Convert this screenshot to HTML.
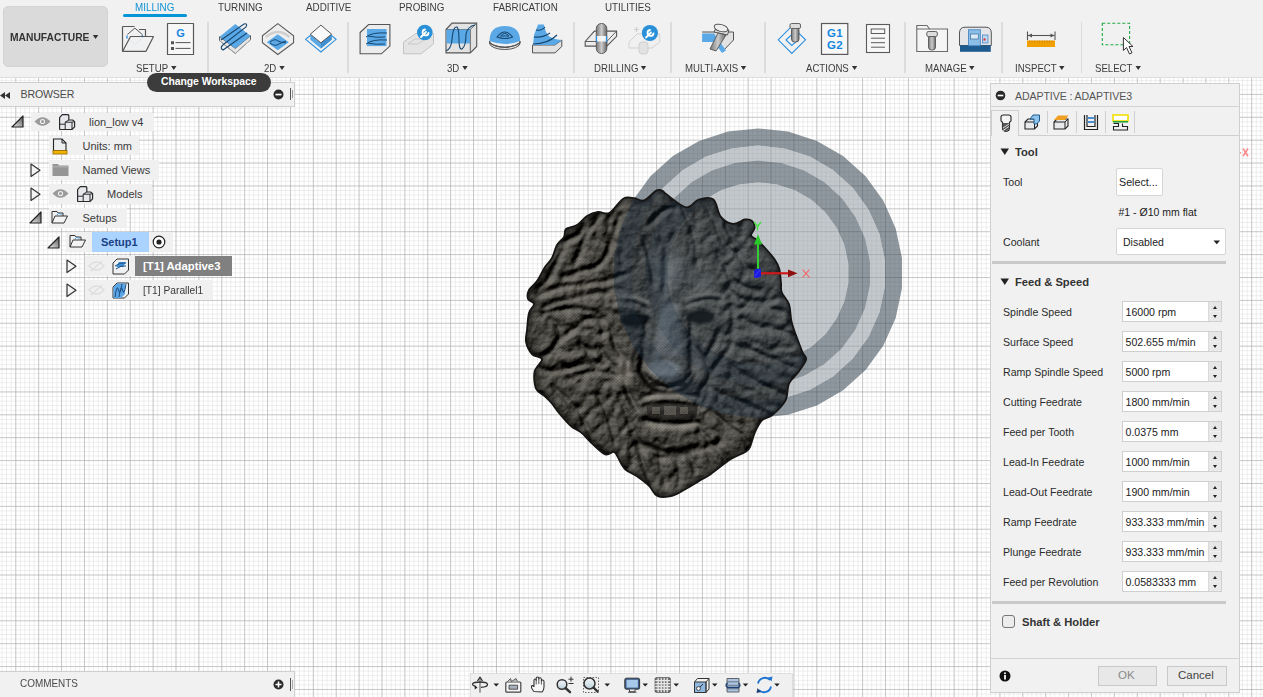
<!DOCTYPE html>
<html><head><meta charset="utf-8">
<style>
*{box-sizing:border-box;margin:0;padding:0}
html,body{width:1263px;height:697px;overflow:hidden;background:#fff;font-family:"Liberation Sans",sans-serif;color:#333}
.abs{position:absolute}
#grid{position:absolute;left:0;top:0}
#tb{position:absolute;left:0;top:0;width:1263px;height:78px;background:#f1f1f1;border-bottom:1px solid #dedede}
.tab{position:absolute;top:1.3px;font-size:10.8px;color:#3c3c3c;white-space:nowrap;transform:scaleX(.91);transform-origin:0 0}
.lbl{position:absolute;top:62px;font-size:10.7px;color:#3c3c3c;white-space:nowrap;transform:scaleX(.9);transform-origin:0 0}
.lbl i{display:inline-block;width:0;height:0;border-left:3.5px solid transparent;border-right:3.5px solid transparent;border-top:4px solid #333;margin-left:3px;vertical-align:2px}
.sep{position:absolute;top:22px;width:1.5px;height:51px;background:#dcdcdc}
.panelhdr{position:absolute;background:#f1f1f1;border:1px solid #dcdcdc}
.ti{position:absolute;font-size:11px;color:#3a3a3a;white-space:nowrap}
.row{position:absolute;left:1003px;font-size:10.6px;color:#2b2b2b;white-space:nowrap}
.inp{position:absolute;left:1122px;width:100px;height:21px;background:#fff;border:1px solid #cfcfcf;font-size:10.6px;color:#222;padding:4px 0 0 2.5px;white-space:nowrap}
.inp .sp{position:absolute;right:0;top:0;width:13.5px;height:19px;background:#e6e6e6;border-left:1px solid #dadada;box-shadow:inset 0 -9.5px 0 #e9e9e9, inset 0 -10px 0 #f4f4f4}
.inp .sp:before{content:"";position:absolute;left:4px;top:4px;border-left:2.5px solid transparent;border-right:2.5px solid transparent;border-bottom:3.5px solid #222}
.inp .sp:after{content:"";position:absolute;left:4px;top:12.5px;border-left:2.5px solid transparent;border-right:2.5px solid transparent;border-top:3.5px solid #222}
</style></head><body>
<svg id="grid" width="1263" height="697">
<defs>
<pattern id="minor" x="15.3" y="93.9" width="4.5774" height="4.5774" patternUnits="userSpaceOnUse">
<path d="M0 0H4.5774M0 0V4.5774" stroke="#dcdcdc" stroke-width="1" fill="none"/>
</pattern>
<pattern id="major" x="15.3" y="93.9" width="22.887" height="22.887" patternUnits="userSpaceOnUse">
<path d="M0 0H22.887M0 0V22.887" stroke="#a2a2a2" stroke-width="1" fill="none"/>
</pattern>
</defs>
<rect width="1263" height="697" fill="#fff"/>
<rect width="1263" height="697" fill="url(#minor)"/>
<rect width="1263" height="697" fill="url(#major)"/>
</svg>

<!-- VIEWPORT -->
<svg class="abs" style="left:0;top:0" width="1263" height="697">
<defs>
<path id="lion" d="M662.0 190.5C663.9 191.2 663.1 192.0 667.1 194.8C671.1 197.6 680.8 206.5 686.1 207.3C691.4 208.1 694.2 200.8 698.8 199.5C703.3 198.2 709.8 196.7 713.4 199.5C717.0 202.3 717.5 212.5 720.7 216.6C724.0 220.7 728.9 223.4 732.9 223.9C736.9 224.4 741.8 220.0 745.0 219.5C748.2 219.0 750.4 219.6 752.0 221.0C753.6 222.4 754.8 225.6 754.6 228.0C754.4 230.4 750.6 233.5 751.0 235.5C751.4 237.5 754.5 237.8 757.0 240.0C759.5 242.2 763.0 245.7 766.0 249.0C769.0 252.3 772.8 256.7 775.0 260.0C777.2 263.3 778.3 265.2 779.3 269.0C780.3 272.8 780.6 279.1 781.0 283.0C781.4 286.9 780.4 288.6 781.7 292.2C783.0 295.8 787.4 299.5 789.0 304.4C790.6 309.3 790.3 316.2 791.5 321.5C792.7 326.8 794.5 331.0 796.3 336.1C798.1 341.2 800.8 348.1 802.4 352.0C804.0 355.9 806.7 356.1 806.1 359.3C805.5 362.6 801.6 367.4 798.8 371.5C795.9 375.6 791.2 378.8 789.0 383.7C786.8 388.6 788.2 395.4 785.4 400.7C782.6 406.0 775.9 412.1 772.0 415.4C768.1 418.6 765.1 417.4 762.2 420.2C759.4 423.0 756.9 427.9 754.9 432.4C752.9 436.9 751.6 443.7 750.0 447.0C748.4 450.3 748.4 449.9 745.1 452.0C741.9 454.1 736.2 455.7 730.5 459.3C724.8 462.9 716.3 470.2 711.0 473.9C705.7 477.5 702.9 478.8 698.8 481.2C694.7 483.6 691.1 486.1 686.6 488.5C682.1 490.9 676.9 494.7 672.0 495.9C667.1 497.1 661.1 497.5 657.3 495.9C653.5 494.3 652.7 489.4 649.3 486.1C645.9 482.8 641.1 479.2 637.0 476.3C632.9 473.4 628.1 472.2 624.9 469.0C621.7 465.8 619.4 459.6 617.6 456.8C615.8 454.0 615.9 452.4 613.9 452.0C611.9 451.6 608.8 455.6 605.4 454.4C602.0 453.2 597.3 448.3 593.2 444.6C589.1 440.9 584.7 435.4 581.0 432.4C577.3 429.3 574.9 429.5 571.2 426.3C567.5 423.1 562.2 416.9 559.0 413.0C555.8 409.1 554.1 406.1 551.7 403.2C549.3 400.3 547.0 398.3 544.4 395.9C541.8 393.4 537.5 392.6 535.9 388.5C534.3 384.4 533.6 376.4 534.6 371.5C535.6 366.6 542.4 362.2 542.0 359.3C541.6 356.4 534.9 357.2 532.2 354.4C529.6 351.5 527.0 346.3 526.1 342.2C525.2 338.1 526.5 334.9 527.0 330.0C527.5 325.1 527.8 317.3 529.0 313.0C530.2 308.7 534.2 306.3 534.0 304.0C533.8 301.7 528.8 301.3 528.0 299.0C527.2 296.7 527.5 293.0 529.0 290.0C530.5 287.0 534.3 284.8 537.0 281.0C539.7 277.2 542.5 270.8 545.0 267.0C547.5 263.2 550.0 261.7 552.0 258.0C554.0 254.3 555.0 248.5 557.0 245.0C559.0 241.5 562.5 239.7 564.0 237.0C565.5 234.3 563.8 231.0 566.0 229.0C568.2 227.0 573.5 227.2 577.0 225.0C580.5 222.8 583.5 218.2 587.0 216.0C590.5 213.8 594.2 212.5 598.0 212.0C601.8 211.5 605.3 215.1 609.5 212.9C613.7 210.7 619.1 201.1 623.2 198.7C627.4 196.2 631.0 197.9 634.4 198.2C637.8 198.5 640.3 201.6 643.9 200.4C647.5 199.2 652.9 192.6 655.9 190.9C658.9 189.2 660.1 189.8 662.0 190.5Z"/>
<clipPath id="lionclip"><use href="#lion"/></clipPath>
<clipPath id="circclip"><circle cx="758" cy="273" r="145"/></clipPath>
<filter id="soft" x="-5%" y="-5%" width="110%" height="110%"><feGaussianBlur stdDeviation="2"/></filter><filter id="soft4" x="-50%" y="-50%" width="200%" height="200%"><feGaussianBlur stdDeviation="4"/></filter>
<filter id="soft15" x="-5%" y="-5%" width="110%" height="110%"><feGaussianBlur stdDeviation="1.4"/></filter>
<radialGradient id="bump"><stop offset="0" stop-color="#f0f"/><stop offset="1" stop-color="#f00"/></radialGradient>
<filter id="relief" x="520" y="185" width="290" height="315" filterUnits="userSpaceOnUse" color-interpolation-filters="sRGB">
 <feGaussianBlur in="SourceGraphic" stdDeviation="2.3" result="b2"/>
 <feGaussianBlur in="SourceGraphic" stdDeviation="5" result="b5"/>
 <feColorMatrix in="b2" type="matrix" values="0 0 0 0 0  0 0 0 0 0  0 0 0 0 0  0 -0.42 0 0 0.42" result="c"/>
 <feColorMatrix in="b5" type="matrix" values="0 0 0 0 0  0 0 0 0 0  0 0 0 0 0  0.3 0 0.25 0 0" result="sh"/>
 <feTurbulence type="fractalNoise" baseFrequency="0.07" numOctaves="4" seed="5" result="nz"/>
 <feComposite in="c" in2="sh" operator="arithmetic" k2="1" k3="1" k4="0" result="h0"/>
 <feComposite in="h0" in2="nz" operator="arithmetic" k2="1" k3="0.3" k4="-0.15" result="h"/>
 <feDiffuseLighting in="h" surfaceScale="5" diffuseConstant="1" lighting-color="#fff" result="l"><feDistantLight azimuth="235" elevation="50"/></feDiffuseLighting>
 <feColorMatrix in="l" type="matrix" values="0.9 0 0 0 -0.39  0.89 0 0 0 -0.39  0.86 0 0 0 -0.39  0 0 0 0 1"/>
</filter>
<pattern id="dots" width="3.3" height="2.9" patternUnits="userSpaceOnUse"><circle cx="0.8" cy="0.8" r="0.6" fill="#000" fill-opacity="0.3"/><circle cx="2.45" cy="2.25" r="0.6" fill="#000" fill-opacity="0.3"/></pattern>
</defs>
<!-- stock rings -->
<path d="M758.0 128.4L788.1 131.6L816.9 140.9L843.1 156.1L865.6 176.3L883.4 200.8L895.7 228.5L902.0 258.1L902.0 288.3L895.7 317.9L883.4 345.6L865.6 370.1L843.1 390.3L816.9 405.5L788.1 414.8L758.0 418.0L727.9 414.8L699.1 405.5L672.9 390.3L650.4 370.1L632.6 345.6L620.3 317.9L614.0 288.3L614.0 258.1L620.3 228.5L632.6 200.8L650.4 176.3L672.9 156.1L699.1 140.9L727.9 131.6ZM731.5 148.4L706.1 156.6L683.0 170.0L663.2 187.8L647.5 209.4L636.6 233.8L631.1 259.9L631.1 286.5L636.6 312.6L647.5 337.0L663.2 358.6L683.0 376.4L706.1 389.8L731.5 398.0L758.0 400.8L784.5 398.0L809.9 389.8L833.0 376.4L852.8 358.6L868.5 337.0L879.4 312.6L884.9 286.5L884.9 259.9L879.4 233.8L868.5 209.4L852.8 187.8L833.0 170.0L809.9 156.6L784.5 148.4L758.0 145.6Z" fill="#33444f" fill-opacity="0.55" fill-rule="evenodd"/>
<path d="M758.0 145.6L784.5 148.4L809.9 156.6L833.0 170.0L852.8 187.8L868.5 209.4L879.4 233.8L884.9 259.9L884.9 286.5L879.4 312.6L868.5 337.0L852.8 358.6L833.0 376.4L809.9 389.8L784.5 398.0L758.0 400.8L731.5 398.0L706.1 389.8L683.0 376.4L663.2 358.6L647.5 337.0L636.6 312.6L631.1 286.5L631.1 259.9L636.6 233.8L647.5 209.4L663.2 187.8L683.0 170.0L706.1 156.6L731.5 148.4ZM734.6 163.1L712.2 170.3L691.8 182.1L674.3 197.9L660.5 216.9L650.9 238.4L646.0 261.4L646.0 285.0L650.9 308.0L660.5 329.5L674.3 348.5L691.8 364.3L712.2 376.1L734.6 383.3L758.0 385.8L781.4 383.3L803.8 376.1L824.2 364.3L841.7 348.5L855.5 329.5L865.1 308.0L870.0 285.0L870.0 261.4L865.1 238.4L855.5 216.9L841.7 197.9L824.2 182.1L803.8 170.3L781.4 163.1L758.0 160.6Z" fill="#929ba2" fill-opacity="0.55" fill-rule="evenodd"/>
<path d="M758.0 160.6L781.4 163.1L803.8 170.3L824.2 182.1L841.7 197.9L855.5 216.9L865.1 238.4L870.0 261.4L870.0 285.0L865.1 308.0L855.5 329.5L841.7 348.5L824.2 364.3L803.8 376.1L781.4 383.3L758.0 385.8L734.6 383.3L712.2 376.1L691.8 364.3L674.3 348.5L660.5 329.5L650.9 308.0L646.0 285.0L646.0 261.4L650.9 238.4L660.5 216.9L674.3 197.9L691.8 182.1L712.2 170.3L734.6 163.1ZM739.1 184.4L721.1 190.3L704.6 199.7L690.5 212.4L679.4 227.8L671.6 245.1L667.7 263.7L667.7 282.7L671.6 301.3L679.4 318.6L690.5 334.0L704.6 346.7L721.1 356.1L739.1 362.0L758.0 364.0L776.9 362.0L794.9 356.1L811.4 346.7L825.5 334.0L836.6 318.6L844.4 301.3L848.3 282.7L848.3 263.7L844.4 245.1L836.6 227.8L825.5 212.4L811.4 199.7L794.9 190.3L776.9 184.4L758.0 182.4Z" fill="#33444f" fill-opacity="0.55" fill-rule="evenodd"/>
<path d="M758.0 182.4L776.9 184.4L794.9 190.3L811.4 199.7L825.5 212.4L836.6 227.8L844.4 245.1L848.3 263.7L848.3 282.7L844.4 301.3L836.6 318.6L825.5 334.0L811.4 346.7L794.9 356.1L776.9 362.0L758.0 364.0L739.1 362.0L721.1 356.1L704.6 346.7L690.5 334.0L679.4 318.6L671.6 301.3L667.7 282.7L667.7 263.7L671.6 245.1L679.4 227.8L690.5 212.4L704.6 199.7L721.1 190.3L739.1 184.4Z" fill="#929ba2" fill-opacity="0.55"/>
<!-- lion -->
<g>
<g clip-path="url(#lionclip)">
<g filter="url(#relief)">
<use href="#lion" fill="#f00"/>

<ellipse cx="668" cy="372" rx="26" ry="18" fill="url(#bump)"/>
<ellipse cx="668" cy="335" rx="22" ry="42" fill="url(#bump)"/>
<ellipse cx="630" cy="368" rx="16" ry="24" fill="url(#bump)"/>
<ellipse cx="706" cy="366" rx="16" ry="24" fill="url(#bump)"/>
<ellipse cx="630" cy="300" rx="22" ry="9" fill="url(#bump)"/>
<ellipse cx="704" cy="297" rx="22" ry="9" fill="url(#bump)"/>
<ellipse cx="668" cy="268" rx="32" ry="30" fill="url(#bump)"/>
<ellipse cx="668" cy="432" rx="30" ry="12" fill="url(#bump)"/>
<ellipse cx="670" cy="398" rx="30" ry="6" fill="url(#bump)"/>
<ellipse cx="575" cy="290" rx="30" ry="10" fill="url(#bump)" transform="rotate(-10 575 290)"/>
<ellipse cx="570" cy="355" rx="26" ry="12" fill="url(#bump)" transform="rotate(-20 570 355)"/>
<ellipse cx="760" cy="340" rx="28" ry="10" fill="url(#bump)" transform="rotate(15 760 340)"/>

<path d="M601.6 346.8C611.3 346.5 593.9 350.2 590.0 350.2C586.1 350.1 582.1 345.8 578.2 346.4C574.3 347.1 570.7 353.8 566.8 354.1C562.9 354.4 558.8 347.7 554.9 348.0C551.0 348.2 547.3 355.0 543.5 355.7C539.6 356.3 522.0 353.3 531.7 351.9" stroke="#ff0" stroke-width="2" fill="none" stroke-linecap="round" opacity="0.8"/>
<path d="M605.6 332.0C612.1 333.1 599.7 335.0 597.1 334.5C594.5 334.1 592.6 330.0 590.0 329.2C587.5 328.5 584.6 329.6 581.9 329.9C579.1 330.2 576.1 331.8 573.6 331.1C571.0 330.4 569.2 326.2 566.6 325.7C564.0 325.2 551.6 326.9 558.1 327.9" stroke="#ff0" stroke-width="2" fill="none" stroke-linecap="round" opacity="0.8"/>
<path d="M610.4 326.7C616.5 328.9 606.1 323.2 603.9 321.7C601.7 320.1 599.7 317.9 597.2 317.3C594.6 316.8 591.3 318.2 588.5 318.2C585.8 318.3 582.9 318.5 580.5 317.4C578.2 316.4 576.5 313.2 574.3 311.7C572.1 310.3 561.1 306.2 567.1 308.7" stroke="#ff0" stroke-width="2" fill="none" stroke-linecap="round" opacity="0.8"/>
<path d="M616.7 314.5C623.4 317.2 611.5 312.0 608.8 311.0C606.1 309.9 602.7 310.0 600.3 308.4C597.9 306.9 597.1 302.6 594.4 301.5C591.7 300.4 586.6 303.5 584.2 302.1C581.7 300.6 582.4 293.8 579.7 292.6C577.1 291.4 562.3 291.3 568.5 294.9" stroke="#ff0" stroke-width="2" fill="none" stroke-linecap="round" opacity="0.8"/>
<path d="M603.8 303.4C609.1 305.8 603.8 295.9 602.6 293.7C601.5 291.5 599.5 290.4 596.9 290.2C594.3 289.9 589.1 293.2 586.9 292.4C584.8 291.5 585.0 287.4 584.0 285.0C583.0 282.5 583.3 278.4 581.1 277.5C579.0 276.6 567.4 275.4 571.2 279.7" stroke="#ff0" stroke-width="2" fill="none" stroke-linecap="round" opacity="0.8"/>
<path d="M622.9 290.6C626.7 293.7 618.9 288.9 616.4 288.5C613.9 288.2 609.4 289.7 608.1 288.2C606.8 286.7 608.9 282.1 608.5 279.7C608.1 277.4 607.8 275.0 605.7 274.3C603.7 273.5 598.1 276.0 596.0 275.2C594.0 274.4 589.1 266.9 593.6 269.4" stroke="#ff0" stroke-width="2" fill="none" stroke-linecap="round" opacity="0.8"/>
<path d="M622.6 266.1C627.6 274.9 613.0 262.6 610.7 259.3C608.4 256.0 611.0 249.6 608.8 246.2C606.6 242.8 599.9 242.3 597.6 238.9C595.3 235.6 597.1 229.8 594.9 226.4C592.7 223.0 586.9 221.9 584.5 218.6C582.2 215.3 574.6 198.6 581.0 206.5" stroke="#ff0" stroke-width="2" fill="none" stroke-linecap="round" opacity="0.8"/>
<path d="M621.8 263.3C623.8 269.1 620.8 258.4 620.9 255.6C621.1 252.8 623.9 248.7 623.0 246.4C622.2 244.1 618.3 243.4 615.8 241.9C613.2 240.5 608.7 240.1 607.6 237.9C606.5 235.8 608.8 231.9 609.0 229.1C609.3 226.2 607.0 215.2 609.2 220.9" stroke="#ff0" stroke-width="2" fill="none" stroke-linecap="round" opacity="0.8"/>
<path d="M642.1 255.9C645.6 267.0 636.7 247.7 634.1 243.6C631.6 239.5 628.6 235.5 626.9 231.1C625.1 226.8 624.1 222.2 623.4 217.5C622.6 212.8 623.0 207.7 622.3 203.0C621.7 198.2 621.1 193.5 619.5 189.1C617.8 184.7 608.9 165.3 612.7 176.5" stroke="#ff0" stroke-width="2" fill="none" stroke-linecap="round" opacity="0.8"/>
<path d="M660.2 243.0C660.6 251.1 662.3 236.3 661.3 233.1C660.3 230.0 654.5 227.2 654.4 224.0C654.3 220.7 660.5 217.0 660.6 213.7C660.8 210.4 656.5 207.5 655.4 204.4C654.3 201.2 653.5 198.0 654.0 194.7C654.6 191.4 657.4 176.6 658.4 184.6" stroke="#ff0" stroke-width="2" fill="none" stroke-linecap="round" opacity="0.8"/>
<path d="M670.7 240.0C670.8 245.9 672.5 235.4 673.5 233.1C674.4 230.8 676.7 228.6 676.4 226.2C676.1 223.8 671.9 221.3 671.6 218.9C671.4 216.6 673.8 214.3 674.8 212.0C675.7 209.7 677.7 207.5 677.3 205.1C677.0 202.7 673.8 192.0 672.6 197.8" stroke="#ff0" stroke-width="2" fill="none" stroke-linecap="round" opacity="0.8"/>
<path d="M690.2 252.0C689.6 257.2 690.0 247.6 689.6 245.3C689.3 243.1 687.7 240.6 687.9 238.4C688.2 236.3 689.8 234.5 691.1 232.6C692.4 230.7 695.0 229.0 695.7 227.0C696.5 225.0 695.9 222.7 695.6 220.5C695.2 218.2 694.5 208.3 693.7 213.5" stroke="#ff0" stroke-width="2" fill="none" stroke-linecap="round" opacity="0.8"/>
<path d="M706.5 257.6C702.1 267.8 701.7 246.2 703.3 242.1C704.9 237.9 713.4 236.5 715.9 232.7C718.3 228.9 717.4 223.8 718.1 219.3C718.8 214.9 717.6 209.6 720.1 205.8C722.5 202.0 731.2 200.7 732.8 196.5C734.4 192.4 734.1 170.9 729.7 181.1" stroke="#ff0" stroke-width="2" fill="none" stroke-linecap="round" opacity="0.8"/>
<path d="M718.9 270.0C713.5 276.2 717.1 261.1 718.9 258.4C720.7 255.7 727.9 256.3 729.8 253.6C731.6 250.9 728.2 244.9 730.0 242.2C731.8 239.5 738.8 240.0 740.6 237.3C742.5 234.6 739.3 228.8 741.1 226.0C742.9 223.3 755.2 213.6 751.5 220.9" stroke="#ff0" stroke-width="2" fill="none" stroke-linecap="round" opacity="0.8"/>
<path d="M721.4 278.2C715.1 286.3 724.0 269.9 726.4 266.6C728.8 263.2 732.9 261.2 735.7 258.2C738.6 255.2 741.1 252.0 743.5 248.6C745.8 245.2 747.1 241.1 749.9 238.1C752.8 235.1 758.0 233.9 760.4 230.6C762.8 227.3 770.9 210.2 764.4 218.1" stroke="#ff0" stroke-width="2" fill="none" stroke-linecap="round" opacity="0.8"/>
<path d="M722.6 297.3C717.8 300.8 724.9 292.8 726.1 290.7C727.4 288.6 728.2 286.0 730.3 284.8C732.5 283.6 736.9 284.9 738.9 283.5C740.9 282.2 741.0 278.9 742.3 276.8C743.6 274.7 744.5 272.2 746.6 271.0C748.7 269.8 759.1 265.4 755.1 269.7" stroke="#ff0" stroke-width="2" fill="none" stroke-linecap="round" opacity="0.8"/>
<path d="M726.9 312.3C720.7 314.6 729.3 305.7 732.0 305.1C734.7 304.6 740.5 309.7 743.2 309.1C745.9 308.6 746.5 304.1 748.2 301.8C749.9 299.4 750.6 295.3 753.4 294.8C756.1 294.3 761.9 299.4 764.6 298.8C767.3 298.2 775.8 289.0 769.5 291.2" stroke="#ff0" stroke-width="2" fill="none" stroke-linecap="round" opacity="0.8"/>
<path d="M735.8 319.0C725.4 321.9 740.1 308.0 744.1 306.4C748.0 304.7 755.4 310.7 759.4 309.2C763.4 307.8 764.3 299.3 768.2 297.6C772.1 296.0 778.9 300.6 783.0 299.2C787.0 297.8 788.5 290.8 792.4 289.1C796.4 287.4 815.9 284.0 806.5 289.0" stroke="#ff0" stroke-width="2" fill="none" stroke-linecap="round" opacity="0.8"/>
<path d="M727.7 336.5C718.9 337.6 733.8 330.8 737.2 329.9C740.6 328.9 744.6 330.6 748.2 330.8C751.8 330.9 755.6 331.9 759.0 330.9C762.4 329.9 765.1 325.0 768.6 324.7C772.2 324.4 776.8 329.5 780.3 329.2C783.9 329.0 798.7 322.0 789.9 323.2" stroke="#ff0" stroke-width="2" fill="none" stroke-linecap="round" opacity="0.8"/>
<path d="M722.4 344.4C713.0 343.9 729.9 342.3 733.7 343.2C737.4 344.1 741.2 349.8 745.0 349.7C748.8 349.6 752.5 342.6 756.2 342.6C760.0 342.6 763.8 349.0 767.5 349.8C771.3 350.6 775.0 348.1 778.8 347.5C782.6 346.9 799.5 346.7 790.1 346.2" stroke="#ff0" stroke-width="2" fill="none" stroke-linecap="round" opacity="0.8"/>
<path d="M739.3 348.7C727.7 346.3 748.7 350.7 753.3 352.3C757.9 353.8 762.4 357.1 767.0 358.1C771.7 359.1 776.5 358.4 781.3 358.2C786.1 358.0 791.0 356.3 795.7 356.8C800.4 357.4 804.9 359.8 809.5 361.4C814.2 363.0 835.1 368.7 823.4 366.6" stroke="#ff0" stroke-width="2" fill="none" stroke-linecap="round" opacity="0.8"/>
<path d="M723.9 358.2C712.4 356.3 732.0 364.5 736.6 365.3C741.2 366.1 746.7 362.7 751.5 363.0C756.2 363.3 760.6 364.7 764.9 367.0C769.1 369.4 772.5 375.3 776.9 377.1C781.3 378.8 786.4 377.4 791.1 377.5C795.9 377.5 816.7 380.3 805.5 377.1" stroke="#ff0" stroke-width="2" fill="none" stroke-linecap="round" opacity="0.8"/>
<path d="M723.6 369.2C718.2 365.7 729.8 367.1 732.2 368.0C734.5 368.9 735.6 372.9 737.6 374.8C739.5 376.6 741.5 378.5 744.0 379.0C746.5 379.4 750.2 376.8 752.6 377.6C755.0 378.4 756.2 382.1 758.2 383.9C760.1 385.8 770.1 391.2 764.3 388.7" stroke="#ff0" stroke-width="2" fill="none" stroke-linecap="round" opacity="0.8"/>
<path d="M731.9 377.1C721.4 371.7 737.3 387.1 741.3 389.6C745.4 392.1 752.2 389.5 756.3 392.0C760.3 394.6 761.4 402.3 765.5 404.8C769.5 407.3 776.5 404.4 780.6 407.0C784.6 409.5 785.6 417.5 789.6 420.0C793.7 422.5 814.5 429.0 804.9 421.9" stroke="#ff0" stroke-width="2" fill="none" stroke-linecap="round" opacity="0.8"/>
<path d="M725.4 395.3C721.1 390.4 733.8 393.1 736.0 394.4C738.3 395.7 737.8 400.5 739.0 403.0C740.3 405.6 741.1 408.7 743.6 409.7C746.0 410.8 751.8 407.6 753.8 409.2C755.8 410.8 754.2 417.0 755.6 419.4C756.9 421.9 767.0 427.8 761.9 423.8" stroke="#ff0" stroke-width="2" fill="none" stroke-linecap="round" opacity="0.8"/>
<path d="M719.8 398.1C714.9 392.4 719.4 406.7 721.7 408.7C724.1 410.6 732.0 407.3 734.0 409.6C735.9 411.9 732.0 419.7 733.6 422.4C735.2 425.0 740.9 423.8 743.5 425.5C746.1 427.2 747.8 429.7 749.2 432.6C750.5 435.4 756.4 448.5 751.5 442.8" stroke="#ff0" stroke-width="2" fill="none" stroke-linecap="round" opacity="0.8"/>
<path d="M707.0 414.3C702.2 405.5 706.2 423.7 708.3 427.1C710.4 430.5 717.9 431.0 719.6 434.6C721.3 438.2 716.9 445.1 718.6 448.7C720.2 452.4 727.2 453.1 729.4 456.5C731.6 459.8 730.2 465.1 731.5 468.9C732.8 472.7 741.3 488.5 737.2 479.4" stroke="#ff0" stroke-width="2" fill="none" stroke-linecap="round" opacity="0.8"/>
<path d="M699.1 432.7C695.8 423.6 706.3 438.2 707.7 441.8C709.1 445.4 706.6 450.5 707.5 454.3C708.4 458.1 711.4 461.1 713.2 464.5C715.0 467.9 717.5 471.1 718.4 474.9C719.3 478.7 717.1 483.7 718.6 487.3C720.0 490.8 730.4 505.5 727.2 496.4" stroke="#ff0" stroke-width="2" fill="none" stroke-linecap="round" opacity="0.8"/>
<path d="M693.5 448.3C692.2 442.5 698.1 452.1 698.4 454.5C698.7 457.0 695.1 460.3 695.3 462.8C695.6 465.2 698.7 466.9 699.9 469.1C701.1 471.2 702.6 473.3 702.6 475.8C702.6 478.3 699.5 481.6 700.1 483.9C700.7 486.2 707.2 495.7 706.1 489.8" stroke="#ff0" stroke-width="2" fill="none" stroke-linecap="round" opacity="0.8"/>
<path d="M673.1 449.8C671.9 444.5 669.5 454.2 669.8 456.3C670.2 458.5 673.6 460.4 675.1 462.4C676.5 464.5 678.7 466.5 678.5 468.7C678.3 470.8 674.8 473.1 673.6 475.3C672.4 477.5 670.7 479.7 671.3 481.8C671.9 483.9 676.8 493.2 677.1 487.9" stroke="#ff0" stroke-width="2" fill="none" stroke-linecap="round" opacity="0.8"/>
<path d="M655.3 441.3C656.7 435.9 659.9 446.2 660.4 448.5C661.0 450.8 659.8 452.9 658.5 455.0C657.3 457.1 653.3 459.0 652.9 461.2C652.6 463.4 655.7 465.9 656.6 468.2C657.5 470.5 659.1 472.9 658.3 475.1C657.6 477.2 652.5 486.7 652.0 481.1" stroke="#ff0" stroke-width="2" fill="none" stroke-linecap="round" opacity="0.8"/>
<path d="M639.9 434.6C642.1 427.9 639.5 440.4 637.9 442.8C636.3 445.3 631.2 446.5 630.3 449.2C629.4 451.9 632.5 455.9 632.6 458.9C632.6 461.8 631.9 464.6 630.3 467.0C628.7 469.5 623.6 470.8 622.7 473.4C621.9 476.1 622.3 489.6 625.1 483.1" stroke="#ff0" stroke-width="2" fill="none" stroke-linecap="round" opacity="0.8"/>
<path d="M632.5 425.8C635.7 417.3 622.9 429.2 621.2 432.4C619.4 435.6 622.8 441.3 622.1 445.0C621.5 448.7 619.8 452.0 617.4 454.8C615.0 457.7 608.9 458.8 607.7 462.2C606.4 465.7 611.0 471.9 610.0 475.5C609.1 479.1 598.2 491.9 601.9 483.7" stroke="#ff0" stroke-width="2" fill="none" stroke-linecap="round" opacity="0.8"/>
<path d="M613.4 405.3C621.1 396.2 612.4 417.0 609.6 420.8C606.8 424.7 599.5 424.9 596.5 428.6C593.5 432.2 594.1 439.0 591.3 442.9C588.6 446.8 582.9 448.3 579.8 452.0C576.7 455.6 575.7 461.0 572.9 464.9C570.2 468.8 556.5 485.4 563.2 475.5" stroke="#ff0" stroke-width="2" fill="none" stroke-linecap="round" opacity="0.8"/>
<path d="M612.0 394.9C621.0 387.6 605.9 402.1 602.2 404.9C598.5 407.7 592.9 408.4 589.8 411.9C586.8 415.5 587.4 423.2 583.8 426.2C580.3 429.2 571.6 426.3 568.3 429.6C565.1 433.0 567.9 443.2 564.5 446.4C561.1 449.6 540.1 457.3 548.1 448.8" stroke="#ff0" stroke-width="2" fill="none" stroke-linecap="round" opacity="0.8"/>
<path d="M613.3 384.2C618.2 380.5 605.6 381.4 603.5 382.7C601.4 384.1 602.5 390.3 600.9 392.3C599.3 394.3 596.3 394.2 593.8 394.9C591.3 395.6 587.6 394.5 585.9 396.5C584.3 398.4 585.6 405.0 583.7 406.5C581.7 408.0 569.2 409.1 574.1 405.4" stroke="#ff0" stroke-width="2" fill="none" stroke-linecap="round" opacity="0.8"/>
<path d="M608.5 369.8C614.3 368.8 604.4 372.0 601.8 371.7C599.2 371.4 595.5 367.7 593.0 367.8C590.6 367.8 588.8 369.7 587.1 371.9C585.4 374.1 584.8 379.4 582.9 381.0C581.0 382.6 578.4 382.1 575.7 381.6C573.1 381.1 561.6 379.9 567.1 378.0" stroke="#ff0" stroke-width="2" fill="none" stroke-linecap="round" opacity="0.8"/>
<path d="M601.5 353.5C608.3 352.1 597.7 363.3 595.1 364.4C592.5 365.5 588.7 360.4 585.8 360.0C582.9 359.7 580.3 360.7 577.8 362.4C575.3 364.2 573.7 370.3 570.9 370.5C568.1 370.7 563.8 363.4 561.1 363.7C558.3 364.0 547.6 374.1 554.3 372.4" stroke="#ff0" stroke-width="2" fill="none" stroke-linecap="round" opacity="0.8"/>
<path d="M601.8 348.2C608.1 347.5 596.9 352.9 594.3 352.6C591.7 352.3 588.8 346.4 586.3 346.4C583.7 346.4 581.4 351.5 578.9 352.7C576.4 353.9 573.9 354.4 571.3 353.8C568.7 353.1 565.8 348.4 563.3 348.9C560.8 349.5 549.6 357.0 556.0 356.8" stroke="#ff0" stroke-width="2" fill="none" stroke-linecap="round" opacity="0.8"/>
<path d="M600.9 214.3C603.8 208.3 594.9 222.6 592.3 226.3C589.7 230.0 587.4 232.4 585.4 236.7C583.4 241.0 582.0 247.8 580.3 252.1C578.6 256.4 571.7 268.8 575.1 262.5" stroke="#ff0" stroke-width="3" fill="none" stroke-linecap="round"/>
<path d="M616.4 216.0C624.7 209.7 614.4 230.4 613.0 236.7C611.6 243.0 610.4 249.0 607.8 253.9C605.2 258.8 602.1 263.0 597.5 265.9C592.9 268.8 586.0 269.7 580.3 271.1C574.5 272.5 557.0 283.7 563.0 274.5" stroke="#ff0" stroke-width="3" fill="none" stroke-linecap="round"/>
<path d="M583.7 226.3C588.9 221.7 580.2 234.1 576.8 236.7C573.3 239.3 566.7 239.5 563.0 241.8C559.3 244.1 557.3 246.7 554.4 250.4C551.5 254.1 540.9 268.2 545.8 264.2" stroke="#ff0" stroke-width="3" fill="none" stroke-linecap="round"/>
<path d="M623.3 274.5C633.6 272.2 609.8 279.7 602.6 281.4C595.4 283.1 587.8 283.8 580.3 284.9C572.8 286.0 564.5 286.6 557.9 288.3C551.3 290.0 529.8 297.5 540.7 295.2" stroke="#ff0" stroke-width="3" fill="none" stroke-linecap="round"/>
<path d="M623.3 200.5C624.4 198.8 618.7 205.9 616.4 209.1C614.1 212.2 608.4 220.8 609.5 219.4" stroke="#ff0" stroke-width="3" fill="none" stroke-linecap="round"/>
<path d="M564.8 241.8C568.5 236.6 561.3 253.0 559.6 257.3C557.9 261.6 556.1 264.2 554.4 267.6C552.7 271.1 552.2 274.6 549.3 278.0C546.4 281.4 534.6 294.3 537.2 288.3" stroke="#ff0" stroke-width="3" fill="none" stroke-linecap="round"/>
<path d="M545.8 307.2C538.6 308.4 555.8 302.3 563.0 300.3C570.2 298.3 581.7 296.4 588.9 295.2C596.1 294.0 613.3 291.4 606.1 293.4" stroke="#ff0" stroke-width="3" fill="none" stroke-linecap="round"/>
<path d="M544.1 315.8C536.9 314.4 553.6 311.9 559.6 310.7C565.6 309.5 574.3 308.6 580.3 308.9C586.3 309.2 592.1 310.7 595.8 312.4C599.5 314.1 611.2 318.7 602.6 319.3" stroke="#ff0" stroke-width="3" fill="none" stroke-linecap="round"/>
<path d="M554.4 348.5C548.4 348.8 561.1 340.2 564.8 336.5C568.5 332.8 572.8 329.1 576.8 326.2C580.8 323.3 585.2 319.9 588.9 319.3C592.6 318.7 597.2 320.1 599.2 322.7C601.2 325.3 608.4 330.5 600.9 334.8" stroke="#ff0" stroke-width="3" fill="none" stroke-linecap="round"/>
<path d="M542.4 355.4C543.9 359.7 553.3 350.2 556.2 346.8C559.1 343.4 559.6 338.8 559.6 334.8C559.6 330.8 558.2 325.0 556.2 322.7C554.2 320.4 549.8 315.6 547.5 321.0" stroke="#ff0" stroke-width="3" fill="none" stroke-linecap="round"/>
<path d="M537.2 367.5C529.2 368.4 548.6 370.9 554.4 370.9C560.1 370.9 566.0 368.6 571.7 367.5C577.5 366.4 583.8 364.3 588.9 364.0C594.0 363.7 611.2 365.2 602.6 365.8" stroke="#ff0" stroke-width="3" fill="none" stroke-linecap="round"/>
<path d="M568.2 379.5C562.8 379.2 575.4 375.5 580.3 374.4C585.2 373.2 592.0 372.3 597.5 372.6C603.0 372.9 617.9 375.0 613.0 376.1" stroke="#ff0" stroke-width="3" fill="none" stroke-linecap="round"/>
<path d="M597.5 348.5C592.9 340.5 603.0 355.4 606.1 358.9C609.2 362.3 613.0 364.6 616.4 369.2C619.8 373.8 623.9 380.1 626.8 386.4C629.7 392.7 638.5 413.4 633.6 407.1" stroke="#ff0" stroke-width="3" fill="none" stroke-linecap="round"/>
<path d="M554.4 386.4C552.1 384.2 559.3 392.9 563.0 396.8C566.7 400.7 578.2 411.7 576.8 410.0" stroke="#ff0" stroke-width="3" fill="none" stroke-linecap="round"/>
<path d="M540.7 393.3C540.7 393.3 547.5 403.6 547.5 403.6" stroke="#ff0" stroke-width="3" fill="none" stroke-linecap="round"/>
<path d="M580.3 341.7C578.6 338.6 583.4 347.4 585.4 350.3C587.4 353.2 590.6 355.8 592.3 358.9C594.0 362.0 597.8 372.1 595.8 369.2" stroke="#ff0" stroke-width="3" fill="none" stroke-linecap="round"/>
<path d="M620.0 397.9C616.1 386.8 625.3 412.1 627.9 418.4C630.5 424.7 634.0 430.5 635.8 435.8C637.6 441.1 637.3 444.5 638.9 450.0C640.5 455.5 643.1 463.1 645.2 468.9C647.3 474.7 655.7 496.5 651.5 484.7" stroke="#ff0" stroke-width="3" fill="none" stroke-linecap="round"/>
<path d="M578.9 405.8C575.5 401.1 583.9 419.7 586.8 426.3C589.7 432.9 592.9 440.5 596.3 445.2C599.7 449.9 610.2 461.3 607.3 454.7" stroke="#ff0" stroke-width="3" fill="none" stroke-linecap="round"/>
<path d="M597.9 396.3C596.6 391.3 604.9 408.2 607.3 413.7C609.7 419.2 610.8 424.5 612.1 429.5C613.4 434.5 617.6 449.2 615.2 443.7" stroke="#ff0" stroke-width="3" fill="none" stroke-linecap="round"/>
<path d="M657.9 456.3C657.6 454.2 661.5 467.4 662.6 472.1C663.7 476.8 665.0 487.3 664.2 484.7" stroke="#ff0" stroke-width="3" fill="none" stroke-linecap="round"/>
<path d="M676.8 456.3C677.3 453.7 680.0 466.8 680.0 472.1C680.0 477.4 677.3 490.5 676.8 487.9" stroke="#ff0" stroke-width="3" fill="none" stroke-linecap="round"/>
<path d="M689.4 456.3C689.4 456.3 695.7 472.1 695.7 472.1" stroke="#ff0" stroke-width="3" fill="none" stroke-linecap="round"/>
<path d="M636.0 430.0C622.7 430.3 636.3 438.3 638.0 442.0C639.7 445.7 641.0 449.3 646.0 452.0C651.0 454.7 659.0 458.3 668.0 458.0C677.0 457.7 691.7 453.0 700.0 450.0C708.3 447.0 728.7 443.3 718.0 440.0" stroke="#ff0" stroke-width="3" fill="none" stroke-linecap="round"/>
<path d="M648.4 420.0C642.2 420.4 656.8 425.4 662.6 426.3C668.4 427.2 676.9 425.9 683.1 425.5C689.3 425.1 705.8 424.8 700.0 423.9" stroke="#ff0" stroke-width="3" fill="none" stroke-linecap="round"/>
<path d="M728.2 300.0C733.9 287.0 732.4 315.4 732.8 323.0C733.2 330.6 733.5 338.2 730.5 345.9C727.5 353.5 719.1 362.0 714.5 368.9C709.9 375.8 705.7 381.9 703.0 387.3C700.3 392.7 694.2 415.7 698.4 401.1" stroke="#ff0" stroke-width="3" fill="none" stroke-linecap="round"/>
<path d="M742.0 318.4C735.5 316.1 753.5 325.3 760.4 327.6C767.3 329.9 776.9 329.9 783.4 332.2C789.9 334.5 806.3 343.6 799.4 341.3" stroke="#ff0" stroke-width="3" fill="none" stroke-linecap="round"/>
<path d="M744.3 345.9C738.6 343.6 754.6 352.4 760.4 355.1C766.1 357.8 773.1 359.7 778.8 362.0C784.5 364.3 800.5 371.6 794.8 368.9" stroke="#ff0" stroke-width="3" fill="none" stroke-linecap="round"/>
<path d="M732.8 366.6C727.0 363.9 743.1 374.7 748.9 378.1C754.6 381.6 761.5 384.6 767.3 387.3C773.0 390.0 789.1 397.6 783.4 394.2" stroke="#ff0" stroke-width="3" fill="none" stroke-linecap="round"/>
<path d="M714.5 391.9C708.0 388.8 726.3 396.1 732.8 398.8C739.3 401.5 747.0 404.8 753.5 407.9C760.0 410.9 778.4 419.8 771.9 417.1" stroke="#ff0" stroke-width="3" fill="none" stroke-linecap="round"/>
<path d="M709.9 410.2C706.1 406.0 720.2 419.4 725.9 424.0C731.6 428.6 740.5 433.6 744.3 437.8C748.1 442.0 754.6 453.9 748.9 449.3" stroke="#ff0" stroke-width="3" fill="none" stroke-linecap="round"/>
<path d="M693.8 419.4C690.0 414.9 699.5 428.6 703.0 433.2C706.5 437.8 710.7 442.5 714.5 447.0C718.3 451.5 729.4 464.6 725.9 460.0" stroke="#ff0" stroke-width="3" fill="none" stroke-linecap="round"/>
<path d="M755.8 300.0C752.4 297.7 766.5 306.9 771.9 309.2C777.2 311.5 784.5 311.5 787.9 313.8C791.3 316.1 797.9 325.3 792.5 323.0" stroke="#ff0" stroke-width="3" fill="none" stroke-linecap="round"/>
<path d="M650.3 224.4C647.1 225.6 654.6 218.1 657.2 215.8C659.8 213.5 662.6 211.8 665.8 210.7C669.0 209.5 678.8 206.6 676.2 208.9" stroke="#ff0" stroke-width="3" fill="none" stroke-linecap="round"/>
<path d="M681.3 207.2C680.2 200.9 687.7 218.7 690.0 224.4C692.3 230.2 694.0 235.4 695.1 241.7C696.2 248.0 699.1 268.1 696.8 262.3" stroke="#ff0" stroke-width="3" fill="none" stroke-linecap="round"/>
<path d="M703.7 203.8C699.7 197.8 709.7 210.6 712.3 215.8C714.9 221.0 716.9 229.6 719.2 234.8C721.5 240.0 723.2 243.9 726.1 246.8C729.0 249.7 740.2 259.2 736.5 252.0" stroke="#ff0" stroke-width="3" fill="none" stroke-linecap="round"/>
<path d="M726.1 224.4C722.1 218.9 730.7 233.6 733.0 238.2C735.3 242.8 738.2 247.7 739.9 252.0C741.6 256.3 740.4 260.9 743.3 264.1C746.2 267.3 760.0 277.6 757.1 271.0" stroke="#ff0" stroke-width="3" fill="none" stroke-linecap="round"/>
<path d="M717.5 252.0C711.8 248.3 723.8 262.9 726.1 267.5C728.4 272.1 728.4 276.4 731.3 279.6C734.2 282.8 738.4 284.8 743.3 286.5C748.2 288.2 764.9 295.6 760.6 289.9" stroke="#ff0" stroke-width="3" fill="none" stroke-linecap="round"/>
<path d="M727.8 286.5C721.5 285.9 732.5 294.2 736.5 296.8C740.5 299.4 745.7 301.3 752.0 301.9C758.3 302.5 778.3 302.8 774.3 300.2" stroke="#ff0" stroke-width="3" fill="none" stroke-linecap="round"/>
<path d="M665.8 241.7C666.1 237.4 666.1 258.9 665.8 267.5C665.5 276.1 664.1 297.6 664.1 293.3" stroke="#ff0" stroke-width="3" fill="none" stroke-linecap="round"/>
<path d="M643.4 238.2C642.8 233.9 648.6 251.1 650.3 258.8C652.0 266.6 654.9 288.1 653.8 284.7" stroke="#ff0" stroke-width="3" fill="none" stroke-linecap="round"/>
<path d="M613.0 303.0C610.1 301.7 624.3 300.9 630.0 302.0C635.7 303.1 650.2 309.6 647.4 309.8" stroke="#ff0" stroke-width="3" fill="none" stroke-linecap="round"/>
<path d="M686.4 305.3C683.6 305.2 698.2 300.8 704.0 300.0C709.8 299.2 723.8 299.8 720.9 300.7" stroke="#ff0" stroke-width="3" fill="none" stroke-linecap="round"/>
<path d="M642.8 367.2C635.9 369.5 645.5 377.6 649.7 381.0C653.9 384.4 661.9 387.9 668.0 387.9C674.1 387.9 682.6 384.4 686.4 381.0C690.2 377.6 698.3 369.5 691.0 367.2" stroke="#ff0" stroke-width="3" fill="none" stroke-linecap="round"/>
<path d="M647.4 319.0C647.6 315.3 644.8 337.0 644.0 345.0C643.2 353.0 642.2 371.5 642.8 367.2" stroke="#ff0" stroke-width="3" fill="none" stroke-linecap="round"/>
<path d="M691.0 319.0C691.2 315.3 692.0 337.0 692.0 345.0C692.0 353.0 691.2 371.5 691.0 367.2" stroke="#ff0" stroke-width="3" fill="none" stroke-linecap="round"/>
<path d="M642.8 399.4C637.4 398.6 656.6 394.8 665.8 394.8C675.0 394.8 701.7 398.6 697.9 399.4" stroke="#ff0" stroke-width="3" fill="none" stroke-linecap="round"/>
<path d="M645.0 406.0C640.3 405.5 661.2 403.8 670.0 404.0C678.8 404.2 702.2 406.7 698.0 407.0" stroke="#ff0" stroke-width="3" fill="none" stroke-linecap="round"/>
<path d="M642.8 420.0C638.1 420.1 660.8 422.6 670.0 423.0C679.2 423.4 702.4 422.8 697.9 422.3" stroke="#ff0" stroke-width="3" fill="none" stroke-linecap="round"/>
<path d="M641.0 441.0C635.7 442.5 658.2 452.5 668.0 453.0C677.8 453.5 704.5 446.0 700.0 444.0" stroke="#ff0" stroke-width="3" fill="none" stroke-linecap="round"/>
<path d="M629.0 360.3C627.1 357.2 625.2 382.1 626.7 390.2C628.2 398.2 637.8 413.6 638.2 408.6" stroke="#ff0" stroke-width="3" fill="none" stroke-linecap="round"/>
<path d="M704.8 358.0C706.3 354.2 710.2 377.2 709.4 385.6C708.6 394.0 701.0 413.2 700.2 408.6" stroke="#ff0" stroke-width="3" fill="none" stroke-linecap="round"/>
<path d="M612.0 330.0C610.2 328.3 615.2 344.9 618.0 350.0C620.8 355.1 630.0 363.6 629.0 360.3" stroke="#ff0" stroke-width="3" fill="none" stroke-linecap="round"/>
<path d="M720.0 330.0C721.2 328.3 714.5 343.3 712.0 348.0C709.5 352.7 703.5 361.0 704.8 358.0" stroke="#ff0" stroke-width="3" fill="none" stroke-linecap="round"/>
</g>

<g filter="url(#soft15)">
<path d="M612 300Q630 292 650 304" stroke="#c9c4b8" stroke-width="4" fill="none" opacity="0.57"/>
<path d="M684 302Q704 290 724 296" stroke="#c9c4b8" stroke-width="4" fill="none" opacity="0.57"/>
<ellipse cx="634" cy="320" rx="14" ry="7" fill="#000" opacity="0.85"/>
<ellipse cx="701" cy="317" rx="14" ry="7" fill="#000" opacity="0.85"/>
<path d="M660 305Q668 300 678 305L684 360Q668 352 652 360Z" fill="#c0c8d0" opacity="0.25"/>
<ellipse cx="664" cy="368" rx="16" ry="8" fill="#c0c8d0" opacity="0.47"/>
<path d="M640 372Q648 392 668 394Q688 392 696 372" stroke="#000" stroke-width="4" fill="none" opacity="0.95"/>
<path d="M640 345Q632 352 630 372" stroke="#000" stroke-width="3.5" fill="none" opacity="0.85"/>
<path d="M696 345Q704 352 706 372" stroke="#000" stroke-width="3.5" fill="none" opacity="0.85"/>
<ellipse cx="624" cy="372" rx="8" ry="14" fill="#c9c4b8" opacity="0.34"/>
<ellipse cx="700" cy="368" rx="8" ry="14" fill="#c9c4b8" opacity="0.27"/>
<path d="M644 398Q668 392 698 398" stroke="#c9c4b8" stroke-width="3" fill="none" opacity="0.57"/>
<path d="M646 424Q670 430 698 424" stroke="#c9c4b8" stroke-width="3" fill="none" opacity="0.47"/>
<path d="M641 441Q668 458 700 444" stroke="#000" stroke-width="2" fill="none" opacity="0.8"/>
</g>
<g filter="url(#soft4)">
<path d="M662 300Q668 296 676 300L682 362Q668 356 654 362Z" fill="#c8d4de" opacity="0.16"/>
<ellipse cx="668" cy="372" rx="18" ry="9" fill="#c8d4de" opacity="0.3"/>
<ellipse cx="670" cy="268" rx="18" ry="14" fill="#c8d4de" opacity="0.22"/>
<ellipse cx="700" cy="282" rx="10" ry="8" fill="#c8d4de" opacity="0.2"/>
</g>
<path d="M624 318Q634 312 645 320Q635 327 624 318Z" fill="#121110" opacity="0.85"/>
<path d="M688 319Q700 310 714 315Q702 325 688 319Z" fill="#121110" opacity="0.85"/>
<ellipse cx="654.3" cy="384" rx="5" ry="2.8" fill="#141311" opacity="0.8"/>
<ellipse cx="681.8" cy="384" rx="5" ry="2.8" fill="#141311" opacity="0.8"/>
<path d="M646 404Q670 400 698 405L696 419Q670 422 648 418Z" fill="#1e1d1b" opacity="0.6"/>
<path d="M652 407h8v7h-8zM664 406h12v9h-12zM680 407h8v7h-8z" fill="#9a958b" opacity="0.4"/>

<rect x="520" y="185" width="290" height="315" fill="url(#dots)"/>
<use href="#lion" fill="none" stroke="#000" stroke-width="7" stroke-opacity="0.45" filter="url(#soft)"/>
<ellipse cx="668" cy="285" rx="14" ry="18" fill="#c8d0d8" opacity="0.16" filter="url(#soft4)"/>
<ellipse cx="664" cy="335" rx="7" ry="16" fill="#c8d0d8" opacity="0.14" filter="url(#soft4)"/>
<ellipse cx="580" cy="290" rx="25" ry="8" fill="#d8d0c0" opacity="0.12" filter="url(#soft4)" transform="rotate(-15 580 290)"/>
<path d="M758.0 128.4L788.1 131.6L816.9 140.9L843.1 156.1L865.6 176.3L883.4 200.8L895.7 228.5L902.0 258.1L902.0 288.3L895.7 317.9L883.4 345.6L865.6 370.1L843.1 390.3L816.9 405.5L788.1 414.8L758.0 418.0L727.9 414.8L699.1 405.5L672.9 390.3L650.4 370.1L632.6 345.6L620.3 317.9L614.0 288.3L614.0 258.1L620.3 228.5L632.6 200.8L650.4 176.3L672.9 156.1L699.1 140.9L727.9 131.6ZM731.5 148.4L706.1 156.6L683.0 170.0L663.2 187.8L647.5 209.4L636.6 233.8L631.1 259.9L631.1 286.5L636.6 312.6L647.5 337.0L663.2 358.6L683.0 376.4L706.1 389.8L731.5 398.0L758.0 400.8L784.5 398.0L809.9 389.8L833.0 376.4L852.8 358.6L868.5 337.0L879.4 312.6L884.9 286.5L884.9 259.9L879.4 233.8L868.5 209.4L852.8 187.8L833.0 170.0L809.9 156.6L784.5 148.4L758.0 145.6Z" fill="#1a3044" fill-opacity="0.38" fill-rule="evenodd"/>
<path d="M758.0 145.6L784.5 148.4L809.9 156.6L833.0 170.0L852.8 187.8L868.5 209.4L879.4 233.8L884.9 259.9L884.9 286.5L879.4 312.6L868.5 337.0L852.8 358.6L833.0 376.4L809.9 389.8L784.5 398.0L758.0 400.8L731.5 398.0L706.1 389.8L683.0 376.4L663.2 358.6L647.5 337.0L636.6 312.6L631.1 286.5L631.1 259.9L636.6 233.8L647.5 209.4L663.2 187.8L683.0 170.0L706.1 156.6L731.5 148.4ZM734.6 163.1L712.2 170.3L691.8 182.1L674.3 197.9L660.5 216.9L650.9 238.4L646.0 261.4L646.0 285.0L650.9 308.0L660.5 329.5L674.3 348.5L691.8 364.3L712.2 376.1L734.6 383.3L758.0 385.8L781.4 383.3L803.8 376.1L824.2 364.3L841.7 348.5L855.5 329.5L865.1 308.0L870.0 285.0L870.0 261.4L865.1 238.4L855.5 216.9L841.7 197.9L824.2 182.1L803.8 170.3L781.4 163.1L758.0 160.6Z" fill="#1e3244" fill-opacity="0.26" fill-rule="evenodd"/>
<path d="M758.0 160.6L781.4 163.1L803.8 170.3L824.2 182.1L841.7 197.9L855.5 216.9L865.1 238.4L870.0 261.4L870.0 285.0L865.1 308.0L855.5 329.5L841.7 348.5L824.2 364.3L803.8 376.1L781.4 383.3L758.0 385.8L734.6 383.3L712.2 376.1L691.8 364.3L674.3 348.5L660.5 329.5L650.9 308.0L646.0 285.0L646.0 261.4L650.9 238.4L660.5 216.9L674.3 197.9L691.8 182.1L712.2 170.3L734.6 163.1ZM739.1 184.4L721.1 190.3L704.6 199.7L690.5 212.4L679.4 227.8L671.6 245.1L667.7 263.7L667.7 282.7L671.6 301.3L679.4 318.6L690.5 334.0L704.6 346.7L721.1 356.1L739.1 362.0L758.0 364.0L776.9 362.0L794.9 356.1L811.4 346.7L825.5 334.0L836.6 318.6L844.4 301.3L848.3 282.7L848.3 263.7L844.4 245.1L836.6 227.8L825.5 212.4L811.4 199.7L794.9 190.3L776.9 184.4L758.0 182.4Z" fill="#1a3044" fill-opacity="0.38" fill-rule="evenodd"/>
<path d="M758.0 182.4L776.9 184.4L794.9 190.3L811.4 199.7L825.5 212.4L836.6 227.8L844.4 245.1L848.3 263.7L848.3 282.7L844.4 301.3L836.6 318.6L825.5 334.0L811.4 346.7L794.9 356.1L776.9 362.0L758.0 364.0L739.1 362.0L721.1 356.1L704.6 346.7L690.5 334.0L679.4 318.6L671.6 301.3L667.7 282.7L667.7 263.7L671.6 245.1L679.4 227.8L690.5 212.4L704.6 199.7L721.1 190.3L739.1 184.4Z" fill="#3a5064" fill-opacity="0.25"/>
</g>
<use href="#lion" fill="none" stroke="#161513" stroke-width="1.8"/>
</g>
<!-- triad -->
<line x1="758" y1="271" x2="758" y2="243" stroke="#30d030" stroke-width="2"/>
<path d="M754 244.5L758 234L762 244.5Z" fill="#28c828"/>
<line x1="760" y1="273.3" x2="789" y2="273.3" stroke="#d01818" stroke-width="2.2"/>
<path d="M788 269.5L797.5 273.3L788 277.2Z" fill="#901010"/>
<path d="M754.2 270L757 268.8H761V276.5L758.5 277.8H754.2Z" fill="#1a1ae0"/>
<path d="M755 276L760 270" stroke="#4a4aff" stroke-width="0.8"/>
<path d="M754.2 222L757.5 226.5L761 222M757.5 226.5V230.5" stroke="#40e040" stroke-width="1.4" fill="none"/>
<path d="M802.5 269.5L809.5 277.5M809.5 269.5L802.5 277.5" stroke="#ff5a5a" stroke-width="1.1"/>
<path d="M1243 148.5L1248 156.3M1248 148.5L1243 156.3" stroke="#ff8c8c" stroke-width="1.6"/><rect x="1240" y="152" width="1.2" height="1.6" fill="#ff9a9a"/>
</svg>

<!-- TOOLBAR -->
<div id="tb">
 <div class="abs" style="left:2.5px;top:6px;width:105px;height:61px;background:#dadada;border:1px solid #d3d3d3;border-radius:5px"></div>
 <div class="abs" style="left:10px;top:30.5px;font-size:11.2px;font-weight:bold;color:#333;white-space:nowrap;transform:scaleX(.92);transform-origin:0 0">MANUFACTURE<i style="display:inline-block;border-left:3px solid transparent;border-right:3px solid transparent;border-top:4px solid #333;margin-left:4px;vertical-align:2px"></i></div>
 <div class="tab" style="left:135.2px;color:#0e93d6">MILLING</div>
 <div class="abs" style="left:123px;top:14px;width:64px;height:3px;background:#0696d7;border-radius:1.5px"></div>
 <div class="tab" style="left:218px">TURNING</div>
 <div class="tab" style="left:306px">ADDITIVE</div>
 <div class="tab" style="left:399px">PROBING</div>
 <div class="tab" style="left:493px">FABRICATION</div>
 <div class="tab" style="left:605px">UTILITIES</div>

 <div class="sep" style="left:207px"></div>
 <div class="sep" style="left:347px"></div>
 <div class="sep" style="left:573px"></div>
 <div class="sep" style="left:670px"></div>
 <div class="sep" style="left:764px"></div>
 <div class="sep" style="left:904px"></div>
 <div class="sep" style="left:1001px"></div>
 <div class="sep" style="left:1080.5px"></div>

<svg class="abs" style="left:0;top:0" width="1263" height="77">
<defs>
<linearGradient id="drillg" x1="0" y1="0" x2="1" y2="0"><stop offset="0" stop-color="#777"/><stop offset=".5" stop-color="#ccc"/><stop offset="1" stop-color="#666"/></linearGradient>
</defs>
<g fill="none" stroke-linejoin="round">
<!-- SETUP: folder -->
<path d="M122.5 26.5H134.5M122.5 26.5V51.5M139 29.5H145.5V36.5" stroke="#585858" stroke-width="1.2"/>
<path d="M127.4 34.5L134.9 28.1L142.6 34.8" stroke="#585858" stroke-width="1"/>
<path d="M127.5 37L134.9 44L142.5 37V39L134.9 45.5L127.5 39Z" fill="#cfe0ee" stroke="none"/>
<path d="M127 35.5V38.5M142.3 35V37.5" stroke="#3a93e0" stroke-width="1.4"/>
<path d="M130.5 36.5H153.5L146 51.3H122.7Z" fill="#f1f1f1" fill-opacity="0.6" stroke="#585858" stroke-width="1.2"/>
<!-- G doc -->
<rect x="167.5" y="23.5" width="26" height="31" fill="#f7f7f7" stroke="#5a5a5a" stroke-width="1.2"/>
<path d="M171 41.2h3v3h-3zM171 46.9h3v3h-3z" fill="#555" stroke="none"/>
<path d="M175.5 42.6H190.5M175.5 48.4H190.5" stroke="#555" stroke-width="1"/>
</g>
<text x="180.5" y="36.8" font-family="Liberation Sans" font-weight="bold" font-size="11" fill="#1787e0" text-anchor="middle">G</text>

<!-- 2D adaptive -->
<path d="M219.6 36.7V40.8L235.3 53.5L250.5 39.8V35.7L235.3 48.4Z" fill="#e6e6e6" stroke="#555" stroke-width="1"/>
<path d="M219.6 40.8L235.3 53.5L250.5 39.8" fill="none" stroke="#bbb" stroke-width="0.8"/>
<path d="M219.6 36.7L235.3 24.1L250.5 35.7L235.3 48.4Z" fill="#5aa9e6"/>
<path d="M221 40L244 24Q248 23 246 27L224 44Q219 48 223 50L247 33" fill="none" stroke="#17466e" stroke-width="1.1"/>
<!-- 2D pocket -->
<path d="M277.8 23.6L293.6 35.7V42.8L277.8 54.5L262.4 42.8V35.7Z" fill="#eee" stroke="#5a5a5a" stroke-width="1.1"/>
<path d="M266 37Q277.8 27 289.5 37" fill="none" stroke="#cfcfcf" stroke-width="2.5"/>
<path d="M266.8 42.3L277.8 34.3L288.8 42.3L277.8 50.3Z" fill="#5aa9e6"/>
<path d="M270 42Q275 38 278 41Q282 44 286 41M270 43Q275 47 279 44Q283 41 286 43" fill="none" stroke="#17466e" stroke-width="1"/>
<!-- 2D contour -->
<path d="M305.7 39.3L320.9 52L336.1 39.3L320.9 26.6Z" fill="none" stroke="#2a8fe0" stroke-width="1.1"/>
<path d="M310.3 34.2V39.8L320.9 48.4L331.6 39.8V34.2L320.9 42.8Z" fill="#5aa9e6"/>
<path d="M320.9 42.8V48.4L331.6 39.8V34.2Z" fill="#3f8fd0"/>
<path d="M310.3 34.2L320.9 25.1L331.6 34.2L320.9 42.8Z" fill="#fafafa" stroke="#555" stroke-width="1"/>

<!-- 3D adaptive -->
<path d="M360.1 32.5L368.6 24.5H389.9V46.1L381.4 53.8H360.1Z" fill="#ececec" stroke="#555" stroke-width="1.1"/>
<path d="M367 29H386.5V46.1H367Z" fill="#5aa9e6"/>
<path d="M366 37Q372 32 387 33M366 44Q372 39 387 40M368 36Q376 38 385 37M368 43Q376 45 385 44" fill="none" stroke="#17466e" stroke-width="1"/>
<!-- 3D probing -->
<path d="M403.5 42L416 33.5H433.5V44L421 53.8H403.5Z" fill="#e4e4e4" stroke="#c4c4c4" stroke-width="1"/>
<path d="M408 44L415 39H425L418 44Z" fill="none" stroke="#c8c8c8" stroke-width="1"/>
<circle cx="424.8" cy="32.5" r="7.8" fill="#2a90d8"/>
<path d="M421 37L426 32M425 29.5A3 3 0 1 0 428.5 33" fill="none" stroke="#fff" stroke-width="1.8" stroke-linecap="round"/>
<!-- 3D parallel -->
<path d="M446 29.5L452 23.1H476.7V46.5L470.3 52.9H446Z" fill="#e2e2e2" stroke="#555" stroke-width="1.1"/>
<path d="M470.3 29.5V52.9M446 29.5H470.3L476.7 23.1" fill="none" stroke="#555" stroke-width="0.9"/>
<path d="M446.5 29.5H470V43.5H446.5Z" fill="#5aa9e6"/>
<path d="M446 51Q451 49 452 40Q453 26 457 27Q459 29 459 40Q459 50 462 49Q466 46 466 34Q468 26 475 25" fill="none" stroke="#17466e" stroke-width="1.1"/>
<!-- 3D dome -->
<path d="M489.5 41A15.3 6 0 0 0 520.1 41V43A15.3 6.5 0 0 1 489.5 43Z" fill="#e8e8e8" stroke="#555" stroke-width="1"/>
<path d="M489.5 41Q489.5 26 504.8 26Q520.1 26 520.1 41Q504.8 47 489.5 41Z" fill="#5aa9e6"/>
<path d="M497 37Q504.8 27 512.5 37Q504.8 40 497 37Z" fill="none" stroke="#17466e" stroke-width="1.1"/>
<path d="M500.5 36Q504.8 31 509 36Z" fill="none" stroke="#17466e" stroke-width="1"/>
<path d="M489.5 43Q504.8 52 520.1 43" fill="none" stroke="#555" stroke-width="1.1"/>
<!-- 3D steep -->
<path d="M532.5 45L555 45L561.8 40V46.5L555 52.9H532.5Z" fill="#e2e2e2" stroke="#555" stroke-width="1"/>
<path d="M533 45L534 35Q536 30 538 24.5H544Q545 33 550 37Q557 40 561.8 40L555 45Z" fill="#5aa9e6"/>
<path d="M536 30Q542 31 545 27M534 37Q543 38 550 33M533 44Q548 44 557 35" fill="none" stroke="#17466e" stroke-width="1.1"/>

<!-- DRILLING -->
<path d="M585.2 41.5L594.4 31.1H616.6V36.3L606.8 46.1H585.2Z" fill="#ededed" stroke="#555" stroke-width="1.1"/>
<path d="M585.2 41.5H606.8L616.6 31.1M606.8 41.5V46.1" fill="none" stroke="#555" stroke-width="0.9"/>
<rect x="596.3" y="23.5" width="10.5" height="30" rx="5" fill="url(#drillg)" stroke="#555" stroke-width="0.9"/>
<rect x="597" y="36" width="9" height="5.5" fill="#f4f4f4"/>
<path d="M596.5 36V42M606.5 36V42" stroke="#2a8fe0" stroke-width="1.2"/>
<path d="M629 42L637 34H659.7V42L652 48H629Z" fill="#f0f0f0" stroke="#d2d2d2" stroke-width="1"/>
<path d="M634 29.5H639M636.5 27V32" stroke="#cfcfcf" stroke-width="1.2"/>
<rect x="639" y="42" width="9" height="12" rx="3" fill="#e2e2e2" stroke="#cfcfcf"/>
<circle cx="649.9" cy="33" r="8.1" fill="#2a90d8"/>
<path d="M646 37.5L651 32.5M650 30A3 3 0 1 0 653.5 33.5" fill="none" stroke="#fff" stroke-width="1.8" stroke-linecap="round"/>

<!-- MULTI-AXIS -->
<path d="M702.1 32H733.5V40L722 52" fill="#e2e2e2" stroke="#555" stroke-width="1"/>
<path d="M702.1 33.5H714L726 50.5L722 53L714 42H702.1Z" fill="#5aa9e6"/>
<path d="M716 28L729 30L727.5 35L714 32Z" fill="#ddd" stroke="#555" stroke-width="1"/>
<path d="M718 33L726 35L716 51L710 49Z" fill="url(#drillg)" stroke="#555" stroke-width="0.9"/>
<ellipse cx="721" cy="28" rx="7" ry="3.5" fill="#eee" stroke="#555" stroke-width="1" transform="rotate(15 721 28)"/>

<!-- ACTIONS: simulate -->
<path d="M778.2 39.8L791.8 26.2L805.5 39.8L791.8 53.5Z" fill="none" stroke="#2a8fe0" stroke-width="1.1"/>
<path d="M786 40L791.8 34.5L797.8 40L791.8 45.5Z" fill="none" stroke="#2a8fe0" stroke-width="1.1"/>
<rect x="791.5" y="27" width="7.5" height="15" rx="3" fill="url(#drillg)" stroke="#555" stroke-width="0.9"/>
<rect x="790" y="23.5" width="10.5" height="5" rx="1.5" fill="#ddd" stroke="#555" stroke-width="0.9"/>
<!-- G1G2 -->
<rect x="821.5" y="23.5" width="26.3" height="30.9" fill="#f7f7f7" stroke="#5a5a5a" stroke-width="1.2"/>
<!-- post -->
<rect x="866.5" y="24.5" width="23" height="28" fill="#f7f7f7" stroke="#5a5a5a" stroke-width="1.1"/>
<rect x="871.2" y="29" width="13.5" height="4.5" fill="none" stroke="#5a5a5a" stroke-width="1"/>
<path d="M871 38.2H885M871 42.7H885M871 47.2H885" stroke="#5a5a5a" stroke-width="1"/>

<!-- MANAGE -->
<path d="M916.8 51.5V25.5H927L929.5 29H947.5V51.5Z" fill="#f5f5f5" stroke="#6a6a6a" stroke-width="1.1"/>
<path d="M916.8 29H929.5" stroke="#6a6a6a" stroke-width="1"/>
<rect x="928.5" y="35" width="7" height="15" rx="3" fill="url(#drillg)" stroke="#555" stroke-width="0.9"/>
<rect x="926.8" y="31.5" width="10.5" height="5" rx="1.5" fill="#ddd" stroke="#555" stroke-width="0.9"/>
<path d="M959.5 45.5V33Q959.5 27.2 965 27.2H986Q991.3 27.2 991.3 33V45.5Z" fill="#e3e5e8" stroke="#555" stroke-width="1"/>
<rect x="960" y="45.3" width="30.8" height="6.5" fill="#1d5a8e"/>
<rect x="968.5" y="29.8" width="11.8" height="16" fill="#8cbfe8" stroke="#3a7cbf" stroke-width="0.8"/>
<rect x="970.5" y="34" width="7.8" height="5" fill="#d9e8f4" stroke="#3a6a9a" stroke-width="0.7"/>
<rect x="982.5" y="35" width="5.5" height="8" fill="#bcd8f0" stroke="#3a7cbf" stroke-width="0.7"/>
<rect x="983.5" y="38.5" width="2" height="2" fill="#e02020"/>

<!-- INSPECT -->
<path d="M1027.5 31.5V40M1055 31.5V40" stroke="#555" stroke-width="1.1"/>
<path d="M1028 35.5H1054.5" stroke="#555" stroke-width="1.1"/>
<path d="M1028 35.5L1032 33.5V37.5ZM1054.5 35.5L1050.5 33.5V37.5Z" fill="#555"/>
<rect x="1027" y="40.5" width="28" height="6.5" fill="#f0a000"/>
<path d="M1029.5 40.5v2M1032 40.5v2M1034.5 40.5v2M1037 40.5v2M1039.5 40.5v2M1042 40.5v2M1044.5 40.5v2M1047 40.5v2M1049.5 40.5v2M1052 40.5v2" stroke="#c27a00" stroke-width="0.6"/>

<!-- SELECT -->
<rect x="1102.3" y="23.3" width="27.3" height="21.5" fill="none" stroke="#22aa44" stroke-width="1.1" stroke-dasharray="3 2"/>
<path d="M1123.4 37.5V50.5L1126.5 47.5L1129.5 54L1132 52.8L1129 46.5H1133Z" fill="#fff" stroke="#333" stroke-width="1"/>
</svg>
<div class="abs" style="left:823px;top:27px;width:24px;font-family:'Liberation Sans';font-weight:bold;font-size:11.5px;line-height:12px;color:#1787e0;text-align:center;letter-spacing:0.3px">G1<br>G2</div>

 <div class="lbl" style="left:136.4px">SETUP<i></i></div>
 <div class="lbl" style="left:264.1px">2D<i></i></div>
 <div class="lbl" style="left:447.3px">3D<i></i></div>
 <div class="lbl" style="left:593.6px">DRILLING<i></i></div>
 <div class="lbl" style="left:685.2px">MULTI-AXIS<i></i></div>
 <div class="lbl" style="left:806px">ACTIONS<i></i></div>
 <div class="lbl" style="left:925.4px">MANAGE<i></i></div>
 <div class="lbl" style="left:1015.1px">INSPECT<i></i></div>
 <div class="lbl" style="left:1094.5px">SELECT<i></i></div>
</div>

<!-- BROWSER -->
<div class="panelhdr" style="left:-1px;top:82px;width:296px;height:25px;border-color:#cfcfcf"></div>
<svg class="abs" style="left:0;top:92px" width="11" height="7"><path d="M0 3.5L5 0V7ZM5 3.5L10 0V7Z" fill="#333"/></svg>
<div class="ti" style="left:20.5px;top:88px;font-size:10.6px;color:#4b4b4b;letter-spacing:-0.15px">BROWSER</div>
<svg class="abs" style="left:273px;top:89px" width="11" height="11"><circle cx="5.5" cy="5.5" r="5" fill="#2a2a2a"/><rect x="2.5" y="4.7" width="6" height="1.7" fill="#fff"/></svg>
<div class="abs" style="left:290px;top:88px;width:1px;height:12px;background:#555"></div>
<div class="abs" style="left:292px;top:90px;width:1px;height:8px;background:#999"></div>

<!-- row bgs -->
<div class="abs" style="left:31px;top:113px;width:123px;height:18px;background:#f0f0f0"></div>
<div class="abs" style="left:49px;top:136px;width:90px;height:19px;background:#f0f0f0"></div>
<div class="abs" style="left:49px;top:160px;width:110px;height:20px;background:#f0f0f0"></div>
<div class="abs" style="left:49px;top:184px;width:103px;height:20px;background:#f0f0f0"></div>
<div class="abs" style="left:49px;top:208px;width:78px;height:20px;background:#f0f0f0"></div>
<div class="abs" style="left:67px;top:232px;width:106px;height:20px;background:#f0f0f0"></div>
<div class="abs" style="left:92px;top:232px;width:57px;height:20px;background:#aad4ff"></div>
<div class="abs" style="left:85px;top:256px;width:50px;height:20px;background:#f0f0f0"></div>
<div class="abs" style="left:135px;top:256px;width:97px;height:20px;background:#808080"></div>
<div class="abs" style="left:85px;top:280px;width:128px;height:20px;background:#f0f0f0"></div>

<!-- tri expanded -->
<svg class="abs" style="left:11px;top:115px" width="13" height="13"><defs><linearGradient id="tg" x1="0" y1="1" x2="1" y2="0"><stop offset="0" stop-color="#eee"/><stop offset="1" stop-color="#555"/></linearGradient></defs><path d="M1 12L12 1V12Z" fill="url(#tg)" stroke="#222" stroke-width="1.2" stroke-linejoin="round"/></svg>
<svg class="abs" style="left:29px;top:211px" width="13" height="13"><path d="M1 12L12 1V12Z" fill="url(#tg)" stroke="#222" stroke-width="1.2" stroke-linejoin="round"/></svg>
<svg class="abs" style="left:47px;top:236px" width="13" height="13"><path d="M1 12L12 1V12Z" fill="url(#tg)" stroke="#222" stroke-width="1.2" stroke-linejoin="round"/></svg>
<!-- tri collapsed -->
<svg class="abs" style="left:30px;top:163px" width="12" height="15"><path d="M1 1L10 7.2L1 13.5Z" fill="#f4f4f4" stroke="#333" stroke-width="1.2" stroke-linejoin="round"/></svg>
<svg class="abs" style="left:30px;top:187px" width="12" height="15"><path d="M1 1L10 7.2L1 13.5Z" fill="#f4f4f4" stroke="#333" stroke-width="1.2" stroke-linejoin="round"/></svg>
<svg class="abs" style="left:66px;top:259px" width="12" height="15"><path d="M1 1L10 7.2L1 13.5Z" fill="#f4f4f4" stroke="#333" stroke-width="1.2" stroke-linejoin="round"/></svg>
<svg class="abs" style="left:66px;top:283px" width="12" height="15"><path d="M1 1L10 7.2L1 13.5Z" fill="#f4f4f4" stroke="#333" stroke-width="1.2" stroke-linejoin="round"/></svg>

<!-- eyes -->
<svg class="abs" style="left:34px;top:116px" width="17" height="11"><path d="M0.5 5.5Q8.5 -3 16.5 5.5Q8.5 14 0.5 5.5Z" fill="#9a9a9a"/><circle cx="8.5" cy="5.5" r="2.6" fill="#f0f0f0"/><circle cx="8.5" cy="5.5" r="1.5" fill="#9a9a9a"/></svg>
<svg class="abs" style="left:52px;top:188px" width="17" height="11"><path d="M0.5 5.5Q8.5 -3 16.5 5.5Q8.5 14 0.5 5.5Z" fill="#9a9a9a"/><circle cx="8.5" cy="5.5" r="2.6" fill="#f0f0f0"/><circle cx="8.5" cy="5.5" r="1.5" fill="#9a9a9a"/></svg>
<svg class="abs" style="left:88px;top:260px" width="17" height="12"><path d="M1 6Q8.5 -2 16 6Q8.5 14 1 6Z" fill="none" stroke="#dedede" stroke-width="1.6"/><path d="M3 11L14 1" stroke="#dedede" stroke-width="1.6"/></svg>
<svg class="abs" style="left:88px;top:284px" width="17" height="12"><path d="M1 6Q8.5 -2 16 6Q8.5 14 1 6Z" fill="none" stroke="#dedede" stroke-width="1.6"/><path d="M3 11L14 1" stroke="#dedede" stroke-width="1.6"/></svg>

<!-- component icons -->
<svg class="abs" style="left:59px;top:114px" width="17" height="17"><path d="M0.6 3.6L3.3 0.7H9.2L9.8 1.6V6H13.6L15.6 7.6V12.8L12.9 15.5H1.1L0.6 15Z" fill="#e6e8ec" stroke="#2a2a2a" stroke-width="1.2" stroke-linejoin="round"/><path d="M6.2 15.5V8.2L9.8 6M0.6 10.2H6.2M6.2 8.2H13L15.6 7.6M13 8.2V15" stroke="#2a2a2a" stroke-width="1" fill="none"/></svg>
<svg class="abs" style="left:77px;top:186px" width="17" height="17"><path d="M0.6 3.6L3.3 0.7H9.2L9.8 1.6V6H13.6L15.6 7.6V12.8L12.9 15.5H1.1L0.6 15Z" fill="#e6e8ec" stroke="#2a2a2a" stroke-width="1.2" stroke-linejoin="round"/><path d="M6.2 15.5V8.2L9.8 6M0.6 10.2H6.2M6.2 8.2H13L15.6 7.6M13 8.2V15" stroke="#2a2a2a" stroke-width="1" fill="none"/></svg>
<!-- units doc -->
<svg class="abs" style="left:52px;top:138px" width="16" height="17"><path d="M1.5 1H10L14 5V13H1.5Z" fill="#eceef0" stroke="#222" stroke-width="1.1"/><path d="M10 1V5H14" fill="none" stroke="#222" stroke-width="1"/><rect x="1" y="12.5" width="14" height="3.5" fill="#f0b400" stroke="#9a6a00" stroke-width="0.8"/></svg>
<!-- named views folder -->
<svg class="abs" style="left:52px;top:163px" width="17" height="14"><path d="M0.5 1H6L7 2.5H16.5V13H0.5Z" fill="#959595"/><path d="M0.5 3.8H16.5" stroke="#bdbdbd" stroke-width="0.8"/></svg>
<!-- setups folder -->
<svg class="abs" style="left:51px;top:210px" width="18" height="14"><path d="M1 1.5H6L7 3H12V6" fill="none" stroke="#333" stroke-width="1"/><path d="M1 1.5V13H13L16.5 6H4L1 13" fill="#f4f4f4" stroke="#333" stroke-width="1"/><path d="M6 5Q8 1.5 10.5 5" fill="none" stroke="#4aa0e0" stroke-width="1"/></svg>
<svg class="abs" style="left:69px;top:234px" width="18" height="14"><path d="M1 1.5H6L7 3H12V6" fill="none" stroke="#333" stroke-width="1"/><path d="M1 1.5V13H13L16.5 6H4L1 13" fill="#f4f4f4" stroke="#333" stroke-width="1"/><path d="M6 5Q8 1.5 10.5 5" fill="none" stroke="#4aa0e0" stroke-width="1"/></svg>
<!-- radio -->
<svg class="abs" style="left:152px;top:235px" width="14" height="14"><circle cx="7" cy="7" r="5.8" fill="#fff" stroke="#222" stroke-width="1.2"/><circle cx="7" cy="7" r="2.6" fill="#222"/></svg>
<!-- op icons -->
<svg class="abs" style="left:112px;top:258px" width="18" height="17"><path d="M1 5L5 1H16.5V12L12.5 16H1Z" fill="#eef0f2" stroke="#333" stroke-width="1"/><path d="M4 9L7 4H14L11 9Z" fill="#3d8fd6"/><path d="M3 8Q8 4 14 5M4 11Q9 7 14 8" fill="none" stroke="#1e4f82" stroke-width="1"/></svg>
<svg class="abs" style="left:112px;top:282px" width="18" height="17"><path d="M1 5L5 1H16.5V12L12.5 16H1Z" fill="#eef0f2" stroke="#333" stroke-width="1"/><path d="M1.5 5L5 1.5H13V12L9 16H1.5Z" fill="#5aa6e6"/><path d="M3 15Q5 1 6.5 8Q8 15 10 2M7 15Q9 1 10.5 8Q12 15 14 2" fill="none" stroke="#1e4f82" stroke-width="1"/></svg>

<div class="ti" style="left:89px;top:116px">lion_low v4</div>
<div class="ti" style="left:82.5px;top:140px">Units: mm</div>
<div class="ti" style="left:82.5px;top:164px">Named Views</div>
<div class="ti" style="left:107px;top:188px">Models</div>
<div class="ti" style="left:82.5px;top:212px">Setups</div>
<div class="ti" style="left:101px;top:236px;font-weight:bold;color:#1b3f86">Setup1</div>
<div class="ti" style="left:143px;top:260px;font-weight:bold;color:#fff;font-size:11.3px">[T1] Adaptive3</div>
<div class="ti" style="left:143px;top:284px;transform:scaleX(.93);transform-origin:0 0">[T1] Parallel1</div>

<!-- RIGHT PANEL -->
<div class="abs" style="left:990px;top:83px;width:250px;height:610px;background:#f1f1f1;border:1px solid #cfcfcf"></div>
<div class="abs" style="left:991px;top:106px;width:248px;height:1px;background:#d4d4d4"></div>
<svg class="abs" style="left:995px;top:90px" width="11" height="11"><circle cx="5.5" cy="5.5" r="4.8" fill="#2a2a2a"/><rect x="2.7" y="4.7" width="5.6" height="1.6" fill="#fff"/></svg>
<div class="ti" style="left:1015px;top:89.5px;font-size:10.6px;color:#555;letter-spacing:-0.1px">ADAPTIVE : ADAPTIVE3</div>
<!-- tabs -->
<div class="abs" style="left:991px;top:135px;width:248px;height:1px;background:#cfcfcf"></div>
<div class="abs" style="left:991px;top:110px;width:28px;height:26px;background:#f1f1f1;border:1px solid #cfcfcf;border-bottom:none"></div>
<div class="abs" style="left:1047px;top:111px;width:1px;height:22px;background:#d0d0d0"></div>
<div class="abs" style="left:1076px;top:111px;width:1px;height:22px;background:#d0d0d0"></div>
<div class="abs" style="left:1105px;top:111px;width:1px;height:22px;background:#d0d0d0"></div>
<div class="abs" style="left:1134px;top:111px;width:1px;height:22px;background:#d0d0d0"></div>
<!-- tool tab icon -->
<svg class="abs" style="left:999px;top:114px" width="14" height="19"><path d="M2 3Q2 1 4.5 1H9.5Q12 1 12 3V6.5Q12 8 10.5 8V14Q10.5 17 7 17.5Q3.5 17 3.5 14V8Q2 8 2 6.5Z" fill="#f5f5f5" stroke="#222" stroke-width="1.1"/><path d="M3.5 9H10.5V15L6 17.5L3.5 15Z" fill="#555"/><path d="M4 14L10 10M4 16.5L10 12.5" stroke="#ddd" stroke-width="1"/></svg>
<!-- stock tab -->
<svg class="abs" style="left:1024px;top:114px" width="17" height="17"><path d="M1 8L4 5H13.5V12L10.5 15H1Z" fill="#e8eaec" stroke="#222" stroke-width="1.1"/><path d="M1 8H10.5V15M10.5 8L13.5 5" fill="none" stroke="#222" stroke-width="1"/><path d="M6 5L9 1H15.5V7L12.5 10H10V5Z" fill="#8cc4ee" stroke="#1e5a8c" stroke-width="1"/></svg>
<!-- geometry tab -->
<svg class="abs" style="left:1053px;top:114px" width="17" height="17"><path d="M1 8L4 5H15V12L12 15H1Z" fill="#e8eaec" stroke="#222" stroke-width="1.1"/><path d="M1 8H12V15M12 8L15 5" fill="none" stroke="#222" stroke-width="1"/><path d="M1 6L5 1.5H15.5L12 6Z" fill="#f0a020"/></svg>
<!-- heights tab -->
<svg class="abs" style="left:1083px;top:114px" width="16" height="17"><path d="M1.5 1V15.5H14.5V1M4 1V12.5H12V1" fill="#f0f0f0" stroke="#222" stroke-width="1.2"/><rect x="4.5" y="3" width="7" height="2" fill="#4a90d0"/><rect x="4.5" y="7" width="7" height="2" fill="#4a90d0"/></svg>
<!-- passes tab -->
<svg class="abs" style="left:1112px;top:114px" width="17" height="17"><rect x="1" y="1" width="15" height="6" fill="#fff" stroke="#f2e000" stroke-width="1.6"/><rect x="1" y="7" width="15" height="1.6" fill="#2aa040"/><path d="M1.5 9.5H6.5V12.5H1.5V16H15.5V12.5H10.5V9.5" fill="#f0f0f0" stroke="#222" stroke-width="1.1"/></svg>

<svg class="abs" style="left:1000px;top:148px" width="10" height="8"><path d="M0.5 0.5H9L4.8 7Z" fill="#222"/></svg>
<div class="ti" style="left:1015px;top:146px;font-weight:bold;font-size:11.2px;color:#333">Tool</div>
<div class="row" style="top:176px">Tool</div>
<div class="abs" style="left:1115.5px;top:168px;width:47px;height:28px;background:#fff;border:1px solid #d6d6d6;border-radius:2px"></div>
<div class="ti" style="left:1119px;top:176px;font-size:10.7px;color:#222">Select...</div>
<div class="ti" style="left:1118.5px;top:206px;font-size:10.5px;color:#222">#1 - Ø10 mm flat</div>
<div class="row" style="top:236px">Coolant</div>
<div class="abs" style="left:1115.5px;top:228px;width:110px;height:27px;background:#fff;border:1px solid #d6d6d6;border-radius:2px"></div>
<div class="ti" style="left:1123px;top:236px;font-size:10.5px;color:#222">Disabled</div>
<svg class="abs" style="left:1213px;top:240px" width="8" height="5"><path d="M0.5 0.5H7L3.8 4.2Z" fill="#222"/></svg>
<div class="abs" style="left:992px;top:261px;width:234px;height:3px;background:#c9c9c9"></div>

<svg class="abs" style="left:1000px;top:278px" width="10" height="8"><path d="M0.5 0.5H9L4.8 7Z" fill="#222"/></svg>
<div class="ti" style="left:1015px;top:276px;font-weight:bold;font-size:11.2px;color:#333">Feed &amp; Speed</div>
<div class="row" style="top:306px">Spindle Speed</div>
<div class="inp" style="top:301px">16000 rpm<div class="sp"></div></div>
<div class="row" style="top:336px">Surface Speed</div>
<div class="inp" style="top:331px">502.655 m/min<div class="sp"></div></div>
<div class="row" style="top:366px">Ramp Spindle Speed</div>
<div class="inp" style="top:361px">5000 rpm<div class="sp"></div></div>
<div class="row" style="top:396px">Cutting Feedrate</div>
<div class="inp" style="top:391px">1800 mm/min<div class="sp"></div></div>
<div class="row" style="top:426px">Feed per Tooth</div>
<div class="inp" style="top:421px">0.0375 mm<div class="sp"></div></div>
<div class="row" style="top:456px">Lead-In Feedrate</div>
<div class="inp" style="top:451px">1000 mm/min<div class="sp"></div></div>
<div class="row" style="top:486px">Lead-Out Feedrate</div>
<div class="inp" style="top:481px">1900 mm/min<div class="sp"></div></div>
<div class="row" style="top:516px">Ramp Feedrate</div>
<div class="inp" style="top:511px">933.333 mm/min<div class="sp"></div></div>
<div class="row" style="top:546px">Plunge Feedrate</div>
<div class="inp" style="top:541px">933.333 mm/min<div class="sp"></div></div>
<div class="row" style="top:576px">Feed per Revolution</div>
<div class="inp" style="top:571px">0.0583333 mm<div class="sp"></div></div>
<div class="abs" style="left:992px;top:601px;width:234px;height:3px;background:#c9c9c9"></div>
<div class="abs" style="left:1002px;top:615px;width:13px;height:13px;background:#ececec;border:1px solid #777;border-radius:3px"></div>
<div class="ti" style="left:1022px;top:616px;font-weight:bold;font-size:11.2px;color:#333">Shaft &amp; Holder</div>
<div class="abs" style="left:991px;top:658px;width:248px;height:1px;background:#d4d4d4"></div>
<svg class="abs" style="left:999px;top:670px" width="12" height="12"><circle cx="6" cy="6" r="5.5" fill="#111"/><rect x="5.1" y="5" width="1.8" height="4.5" fill="#fff"/><circle cx="6" cy="3.3" r="1" fill="#fff"/></svg>
<div class="abs" style="left:1098px;top:666px;width:59px;height:20px;background:#e8e8e8;border:1px solid #c9c9c9"></div>
<div class="ti" style="left:1118px;top:669px;font-size:11.5px;color:#8a8a8a">OK</div>
<div class="abs" style="left:1167px;top:666px;width:60px;height:20px;background:#ebebeb;border:1px solid #c9c9c9"></div>
<div class="ti" style="left:1178px;top:669px;font-size:11.5px;color:#444">Cancel</div>

<!-- TOOLTIP -->
<div class="abs" style="left:147px;top:72.5px;width:123.5px;height:19px;background:#3c3c3c;border-radius:9.5px"></div>
<div class="abs" style="left:161px;top:76px;font-size:10.4px;font-weight:bold;color:#fff;white-space:nowrap;letter-spacing:-0.05px">Change Workspace</div>

<!-- COMMENTS -->
<div class="panelhdr" style="left:-1px;top:671px;width:295.5px;height:28px;border-color:#cfcfcf"></div>
<div class="ti" style="left:20.3px;top:677px;font-size:10.7px;color:#4b4b4b;transform:scaleX(.93);transform-origin:0 0">COMMENTS</div>
<svg class="abs" style="left:273px;top:679px" width="11" height="11"><circle cx="5.5" cy="5.5" r="5" fill="#2a2a2a"/><path d="M2.5 5.5H8.5M5.5 2.5V8.5" stroke="#fff" stroke-width="1.6"/></svg>
<div class="abs" style="left:290px;top:678px;width:1px;height:13px;background:#555"></div>
<div class="abs" style="left:292px;top:680px;width:1px;height:9px;background:#aaa"></div>

<!-- NAV BAR -->
<div class="abs" style="left:469.5px;top:673px;width:323px;height:25px;background:#f0f0f0;border:1px solid #dedede;border-bottom:none"></div>
<svg class="abs" style="left:469px;top:673px" width="325" height="24">
<defs><linearGradient id="mg" x1="0" y1="0" x2="0" y2="1"><stop offset="0" stop-color="#f4f8fb"/><stop offset="1" stop-color="#bcd0da"/></linearGradient></defs>
<g stroke-linejoin="round">
<!-- orbit -->
<path d="M11 19.5V5.5M8.5 8L11 4.2L13.5 8" fill="none" stroke="#333" stroke-width="1.3"/>
<path d="M11 19.5V5.5" stroke="#fff" stroke-width="0.6"/>
<path d="M6.5 13.5Q3.5 12.2 3.5 11.5Q3.5 9 11 9Q18.5 9 18.5 11.5Q18.5 14 12 14.3" fill="none" stroke="#333" stroke-width="1.3"/>
<path d="M5.5 12L8.5 14.5L5.8 16.5Z" fill="#222"/>
<path d="M24.5 10.5H30L27.2 13.5Z" fill="#222"/>
<!-- capture -->
<rect x="36.8" y="9" width="15" height="10.2" rx="1" fill="#f5f5f5" stroke="#444" stroke-width="1.2"/>
<rect x="40" y="12.2" width="8.6" height="4" fill="#a8afbf" stroke="#444" stroke-width="0.9"/>
<path d="M38.5 8.5L41.5 5.5L42.5 8.5L47 5.5L48.5 8.5" fill="#b9b9b9" stroke="#444" stroke-width="0.8"/>
<!-- hand -->
<path d="M65 18.5Q62 15 62.5 13Q63.5 12 65 13.5V7.5Q65 6 66.2 6Q67.2 6 67.2 7.5V5.5Q67.2 4 68.5 4Q69.8 4 69.8 5.5V6Q70 4.6 71.2 4.8Q72.4 5 72.4 6.5V8Q72.6 6.8 73.8 7Q75 7.2 75 8.5V14Q75 17 73 19Z" fill="#f7f7f7" stroke="#333" stroke-width="1.1"/>
<path d="M67.2 7.5V11.5M69.8 6V11M72.4 8V11.5" stroke="#333" stroke-width="0.8"/>
<!-- zoom +- -->
<circle cx="93" cy="11.5" r="4.8" fill="url(#mg)" stroke="#333" stroke-width="1.5"/>
<path d="M96.5 15L101 19.2" stroke="#333" stroke-width="2.4" stroke-linecap="round"/>
<path d="M99.5 6.2H104.5M102 3.7V8.7M99.5 10.5H104.5" stroke="#333" stroke-width="1"/>
<!-- zoom window -->
<rect x="114.5" y="4.5" width="15" height="15" fill="none" stroke="#555" stroke-width="0.9" stroke-dasharray="1.5 1.5"/>
<circle cx="120.5" cy="10.5" r="5.5" fill="url(#mg)" stroke="#333" stroke-width="1.5"/>
<path d="M124.5 14.5L128.5 18.5" stroke="#333" stroke-width="2.4" stroke-linecap="round"/>
<path d="M135.5 10.5H141L138.2 13.5Z" fill="#222"/>
<!-- display -->
<rect x="155.8" y="5.2" width="14.8" height="11" rx="1.5" fill="#3a5c8c" stroke="#333" stroke-width="1"/>
<rect x="157.5" y="6.8" width="11.4" height="7.8" fill="#a8c8ea"/>
<path d="M160.5 16.5V18.8H166V16.5M159 19.2H167.5" fill="#eee" stroke="#333" stroke-width="0.9"/>
<path d="M173.5 10.5H179L176.2 13.5Z" fill="#222"/>
<!-- grid -->
<rect x="186.2" y="4.8" width="15" height="14.5" rx="1" fill="#777" stroke="#444" stroke-width="0.9"/>
<path d="M189.2 5V19.3M192.2 5V19.3M195.2 5V19.3M198.2 5V19.3M186.2 7.7H201.2M186.2 10.6H201.2M186.2 13.5H201.2M186.2 16.4H201.2" stroke="#e8e8e8" stroke-width="1.3"/>
<path d="M204.5 10.5H210L207.2 13.5Z" fill="#222"/>
<!-- view cube -->
<path d="M225.5 9L228.5 5.5H240V16L237 19.5H225.5Z" fill="#f3f3f3" stroke="#333" stroke-width="1"/>
<rect x="225.5" y="9" width="11.5" height="10.5" fill="#8fb8e0" stroke="#333" stroke-width="1"/>
<path d="M237 9L240 5.5M237 19.5V9" fill="none" stroke="#333" stroke-width="0.9"/>
<circle cx="229.5" cy="15.5" r="2" fill="#eee" stroke="#333" stroke-width="0.8"/>
<path d="M231 14L234 11" stroke="#333" stroke-width="1"/>
<path d="M243 10.5H248.5L245.8 13.5Z" fill="#222"/>
<!-- layers -->
<rect x="258" y="5.5" width="12" height="13.5" fill="#aac6e4" stroke="#555" stroke-width="0.9"/>
<path d="M258 8.8H270M258 12.3H270M258 15.8H270" stroke="#555" stroke-width="0.7"/>
<path d="M258.5 10Q255.5 12.3 258.5 14.5H269.5Q272.5 12.3 269.5 10" fill="none" stroke="#1d3f73" stroke-width="1.3"/>
<path d="M273.8 10.5H279.3L276.5 13.5Z" fill="#222"/>
<!-- refresh -->
<path d="M289 10.5A7 7 0 0 1 301 7M302 13.5A7 7 0 0 1 290 17" fill="none" stroke="#1e72d0" stroke-width="1.8"/>
<path d="M299 4.5L303.5 3.5L302.5 8.5Z" fill="#1e72d0"/>
<path d="M292 19L287.5 20L288.5 15Z" fill="#1d3f73"/>
<path d="M305.2 10.5H310.7L308 13.5Z" fill="#222"/>
</g>
</svg>

</body></html>
